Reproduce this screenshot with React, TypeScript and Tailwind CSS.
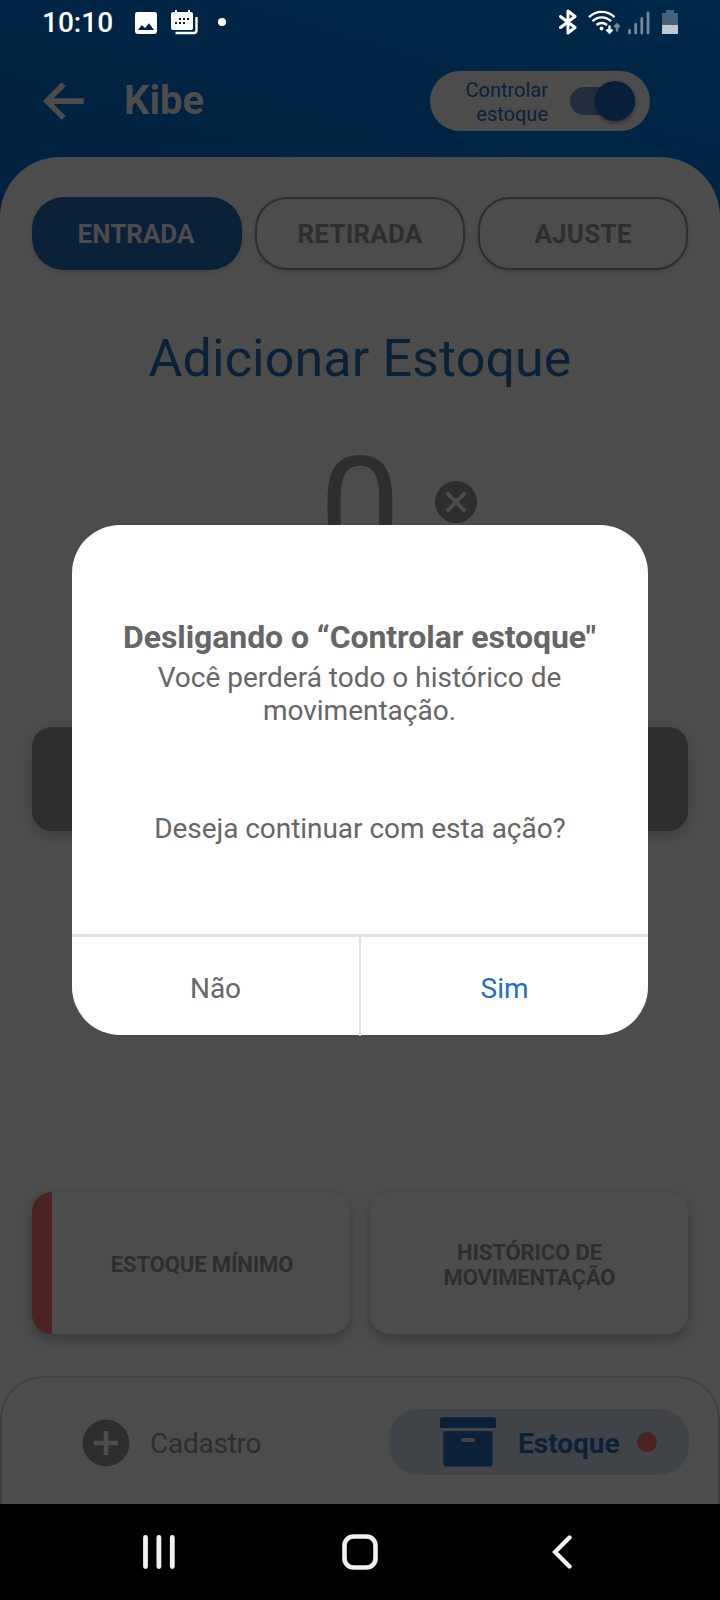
import { useState } from 'react'

type Tab = 'entrada' | 'retirada' | 'ajuste'

const TABS: { key: Tab; label: string }[] = [
  { key: 'entrada', label: 'ENTRADA' },
  { key: 'retirada', label: 'RETIRADA' },
  { key: 'ajuste', label: 'AJUSTE' },
]

export default function App() {
  const [activeTab, setActiveTab] = useState<Tab>('entrada')

  return (
    <div className="relative flex h-[1600px] w-[720px] flex-col overflow-hidden bg-[#4c4c4c] font-['Roboto',sans-serif]">
      <div className="flex h-[1504px] flex-col bg-[#4c4c4c]">
        <div className="flex h-[217px] shrink-0 flex-col bg-linear-to-tr from-[#00203e] to-[#002848]">
          <StatusBar />
          <Header />
        </div>

        <main className="-mt-[60px] flex flex-1 flex-col rounded-t-[60px] bg-[#4c4c4c] pt-10">
          {/* Tab Bar */}
          <div className="grid grid-cols-3 gap-[13px] px-8">
            {TABS.map(tab => (
              <button
                key={tab.key}
                onClick={() => setActiveTab(tab.key)}
                className={
                  activeTab === tab.key
                    ? 'h-[73px] rounded-[32px] bg-[#0b2138] pt-0.5 pr-0.5 text-[26px] font-bold text-[#4c4c4c] shadow-[0_2px_4px_rgba(0,0,0,0.12)]'
                    : 'h-[73px] rounded-[32px] border-2 border-[#2e2e2e] bg-[#4c4c4c] pt-0.5 text-[26px] font-bold tracking-[0.2px] text-[#2e2e2e] shadow-[0_2px_4px_rgba(0,0,0,0.12)]'
                }
              >
                {tab.label}
              </button>
            ))}
          </div>

          <h2 className="mt-[58px] text-center text-[52px] leading-[62px] tracking-[0.1px] text-[#0b2138]">
            Adicionar Estoque
          </h2>

          {/* Quantity */}
          <div className="mt-[37px] grid h-[168px] grid-cols-3 items-center">
            <span className="col-start-2 text-center text-[144px] leading-[168px] text-[#2e2e2e]">0</span>
            <svg className="-mt-[19px] -ml-[45px] size-[42px]" viewBox="0 0 42 42">
              <circle cx="21" cy="21" r="21" fill="#2e2e2e" />
              <path d="M11.7 11.7l18.6 18.6M30.3 11.7L11.7 30.3" stroke="#4c4c4c" strokeWidth="3.8" />
            </svg>
          </div>

          <div className="mx-8 mt-[132px] h-[104px] rounded-[20px] bg-[#2e2e2e] shadow-[0_4px_12px_rgba(0,0,0,0.2)]" />

          {/* Cards */}
          <div className="mt-auto mb-[42px] grid h-[142px] grid-cols-2 gap-5 px-8">
            <button className="flex items-center overflow-hidden rounded-[20px] border-l-[20px] border-[#4c2323] bg-[#4c4c4c] pt-0.5 pl-0.5 text-[22px] font-bold tracking-[-0.1px] text-[#2e2e2e] shadow-[0_5px_12px_rgba(0,0,0,0.25)]">
              <span className="w-full text-center">ESTOQUE MÍNIMO</span>
            </button>
            <button className="rounded-[20px] bg-[#4c4c4c] px-10 pt-[3px] pl-[41px] text-center text-[22px] leading-[25px] font-bold tracking-[-0.1px] text-[#2e2e2e] shadow-[0_5px_12px_rgba(0,0,0,0.25)]">
              HISTÓRICO DE MOVIMENTAÇÃO
            </button>
          </div>

          <BottomTabs />
        </main>
      </div>

      <SystemNav />
      <ConfirmDialog />
    </div>
  )
}

function StatusBar() {
  return (
    <div className="flex h-[44px] shrink-0 items-center justify-between px-[42px] text-white">
      <div className="flex items-center">
        <span className="w-[93px] pt-0.5 text-[28px] leading-[44px] font-medium">10:10</span>
        <svg className="mt-0.5" width="22" height="22" viewBox="0 0 22 22">
          <path
            fillRule="evenodd"
            fill="currentColor"
            d="M2.4 0h17.2A2.4 2.4 0 0 1 22 2.4v17.2a2.4 2.4 0 0 1-2.4 2.4H2.4A2.4 2.4 0 0 1 0 19.6V2.4A2.4 2.4 0 0 1 2.4 0zM3 18h16l-5-6.8-4 4.8-3.2-3z"
          />
        </svg>
        <svg className="ml-[14px]" width="27" height="25" viewBox="0 0 27 25">
          <path fill="currentColor" d="M2 2h2V0h2v2h11V0h2v2h1a2 2 0 0 1 2 2v14a2 2 0 0 1-2 2H2a2 2 0 0 1-2-2V4a2 2 0 0 1 2-2z" />
          <path fill="none" stroke="currentColor" strokeWidth="2.4" d="M25.5 7v13.5a2.5 2.5 0 0 1-2.5 2.5H4.5" />
          <path
            fill="#002340"
            d="M8 8h2v2H8zM12 8h2v2h-2zM16 8h2v2h-2zM4 12h2v2H4zM8 12h2v2H8zM12 12h2v2h-2z"
          />
        </svg>
        <span className="ml-5 size-2 rounded-full bg-white" />
      </div>

      <div className="flex items-center">
        <svg width="18" height="26" viewBox="0 0 18 26">
          <path
            d="M1.5 7.5l14.5 11-7 5.500V2l7 5.500-14.500 11"
            fill="none"
            stroke="currentColor"
            strokeWidth="3"
            strokeLinejoin="round"
            strokeLinecap="round"
          />
        </svg>
        <svg className="ml-[11px]" width="32" height="26" viewBox="0 0 32 26">
          <g fill="none" stroke="currentColor" strokeWidth="2.4">
            <path d="M1 8.2a18 18 0 0 1 25.5 0" />
            <path d="M4.5 12.2a13 13 0 0 1 18.5 0" />
            <path d="M8.5 16a8 8 0 0 1 10.5 0" />
            <path d="M21.5 16.5v7M18.5 20.5l3 3 3-3" />
            <path d="M29 22.5v-7M26.3 18.2l2.7-2.700 2.700 2.700" opacity=".45" />
          </g>
          <circle cx="13.5" cy="19.5" r="1.9" fill="currentColor" />
        </svg>
        <svg className="ml-2" width="22" height="26" viewBox="0 0 22 26" opacity=".45">
          <path
            d="M1.5 21.300v2.700M7.700 15.500V24M13.800 9.500V24M20 4v20"
            stroke="currentColor"
            strokeWidth="2.8"
            strokeLinecap="round"
          />
        </svg>
        <svg className="ml-3" width="16" height="24" viewBox="0 0 16 24">
          <path d="M4 0h8v3h4v12H0V3h4z" fill="#45607a" />
          <path d="M0 15h16v9H0z" fill="#bfc8d1" />
        </svg>
      </div>
    </div>
  )
}

function Header() {
  return (
    <header className="flex h-[113px] shrink-0 items-center pr-[70px] pl-[43px]">
      <svg width="41" height="38" viewBox="0 0 123 114">
        <path d="M56 1l12 12-36 36h90v17H32l36 36-12 11L0 57z" fill="#4c4c4c" />
      </svg>
      <h1 className="mt-px ml-10 text-[40px] leading-[48px] font-bold text-[#4c4c4c]">Kibe</h1>
      <div className="ml-auto flex h-[60px] w-[220px] items-center rounded-[30px] bg-[#4c4c4c]">
        <span className="w-[118px] pt-0.5 text-right text-[20px] leading-6 text-[#0b2138]">
          Controlar
          <br />
          estoque
        </span>
        {/* Switch */}
        <div className="ml-[22px] flex h-7 w-[65px] items-center justify-end rounded-full bg-[#222d3d]">
          <span className="size-10 shrink-0 rounded-full bg-[#091f39] shadow-[0_2px_4px_rgba(0,0,0,0.4)]" />
        </div>
      </div>
    </header>
  )
}

function BottomTabs() {
  return (
    <nav className="flex h-[128px] shrink-0 items-start rounded-t-[43px] border-x-2 border-t-2 border-[#404040] pt-[31px]">
      <button className="flex h-[66px] w-[387px] items-center pt-0.5 pl-[80px] text-[28px] tracking-[-0.25px] text-[#2e2e2e]">
        <svg width="48" height="48" viewBox="0 0 48 48">
          <circle cx="24" cy="24" r="23.4" fill="#2e2e2e" />
          <path d="M24 12v24M12 24h24" stroke="#4c4c4c" strokeWidth="4.6" />
        </svg>
        <span className="ml-5 pt-0.5">Cadastro</span>
      </button>
      <button className="flex h-[66px] w-[300px] items-center rounded-[30px] bg-[#404348] pl-[51px] text-[28px] font-bold text-[#0b2138]">
        <svg width="56" height="50" viewBox="0 0 56 50">
          <path d="M2 0.300h52a2 2 0 0 1 2 2v8.700H0V2.300a2 2 0 0 1 2-2z" fill="#0b2138" />
          <path d="M3.300 14.200h49.400v32.300a3 3 0 0 1-3 3H6.300a3 3 0 0 1-3-3z" fill="#0b2138" />
          <rect x="21" y="21" width="14" height="4" rx="1.5" fill="#404348" />
        </svg>
        <span className="ml-[22px] pt-[3px]">Estoque</span>
        <span className="ml-[17px] size-5 rounded-full bg-[#4c2323]" />
      </button>
    </nav>
  )
}

function SystemNav() {
  return (
    <div className="grid h-24 shrink-0 grid-cols-[159px_1fr_159px] items-center bg-black px-[79px] text-[#f2f2f2]">
      <svg className="mx-auto" width="32" height="34" viewBox="0 0 32 34">
        <path d="M2.5 2.5v29M15.9 2.5v29M29.3 2.5v29" stroke="currentColor" strokeWidth="4.8" strokeLinecap="round" />
      </svg>
      <svg className="mx-auto" width="36" height="36" viewBox="0 0 36 36">
        <rect x="2.5" y="2.5" width="31" height="31" rx="9" fill="none" stroke="currentColor" strokeWidth="4.6" />
      </svg>
      <svg className="mx-auto" width="20" height="34" viewBox="0 0 20 34">
        <path d="M17.5 2.5L3 17l14.5 14.5" fill="none" stroke="currentColor" strokeWidth="4.4" strokeLinecap="round" />
      </svg>
    </div>
  )
}

function ConfirmDialog() {
  return (
    <div className="absolute inset-x-[72px] top-[525px] flex h-[510px] flex-col rounded-[48px] bg-white text-[#666]">
      <div className="flex h-[409px] shrink-0 flex-col items-center pt-[93px] text-center text-[28px] leading-[33px]">
        <h3 className="pr-px text-[32px] leading-[38px] font-bold tracking-[-0.08px] whitespace-nowrap">
          Desligando o “Controlar estoque"
        </h3>
        <p className="mt-[5px] w-[460px] pr-px">Você perderá todo o histórico de movimentação.</p>
        <p className="mt-[85px] tracking-[-0.05px]">Deseja continuar com esta ação?</p>
      </div>
      <div className="flex h-[101px] border-t-[3px] border-[#dfe3e9] text-[28px]">
        <button className="flex-1 pt-1.5">Não</button>
        <span className="-mb-px w-[2px] bg-[#dfe1e5]" />
        <button className="flex-1 pt-1.5 text-[#1f6dc9]">Sim</button>
      </div>
    </div>
  )
}
